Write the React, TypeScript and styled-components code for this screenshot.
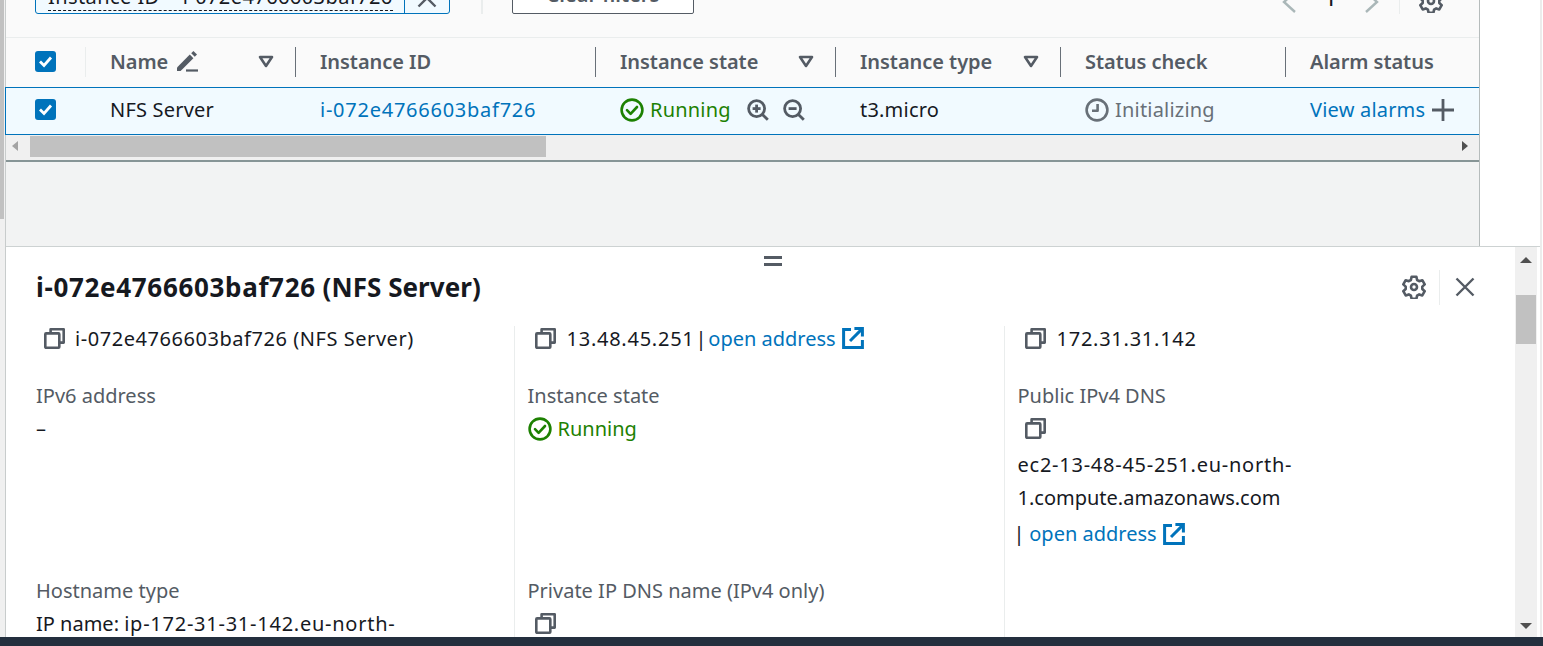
import React from "react";
import styled, { createGlobalStyle } from "styled-components";

const GlobalStyle = createGlobalStyle`
  html, body {
    margin: 0;
    padding: 0;
    background: #fff;
    overflow: hidden;
  }
  * {
    box-sizing: border-box;
  }
`;

const FONT = `"Noto Sans", "Open Sans", "Liberation Sans", sans-serif`;

function CopyIcon() {
  return (
    <CopySvg viewBox="0 0 21 21" fill="none" stroke="#545b64" strokeWidth="2.6">
      <path d="M6.6 5V1.3h13.1V14.6H15.4" strokeLinejoin="round" />
      <rect x="1.3" y="5.4" width="14" height="14.3" rx="0.8" />
    </CopySvg>
  );
}

function CheckCircle() {
  return (
    <StatusSvg viewBox="0 0 24 24" fill="none" stroke="#1d8102" strokeWidth="2.6">
      <circle cx="12" cy="12" r="10.4" />
      <path d="M7 12.2l3.6 3.6L17 9" strokeLinecap="round" strokeLinejoin="round" />
    </StatusSvg>
  );
}

function ClockIcon() {
  return (
    <StatusSvg viewBox="0 0 24 24" fill="none" stroke="#687078" strokeWidth="2.6">
      <circle cx="12" cy="12" r="10.4" />
      <path d="M12.6 6v6.8H7" strokeLinejoin="round" />
    </StatusSvg>
  );
}

function ZoomIcon({ plus }: { plus?: boolean }) {
  return (
    <ZoomSvg viewBox="0 0 22 22" fill="none" stroke="#545b64" strokeWidth="2.8">
      <circle cx="9.6" cy="9.6" r="8" />
      <path d="M15.4 15.4l5.4 5.4" />
      <path d="M5.6 9.6h8" />
      {plus && <path d="M9.6 5.6v8" />}
    </ZoomSvg>
  );
}

function FilterIcon() {
  return (
    <FilterSvg viewBox="0 0 16 13" fill="none" stroke="#545b64" strokeWidth="2.6">
      <path d="M2 2h12L8 11z" strokeLinejoin="round" />
    </FilterSvg>
  );
}

function PencilIcon() {
  return (
    <PencilSvg viewBox="0 0 22 22" fill="#545b64">
      <path d="M1 17.6L13.8 4.6l3.6 3.6L4.6 21H1z" />
      <path d="M15.2 3.2L17.4 1 21 4.6 18.8 6.8z" />
      <rect x="10" y="19.4" width="12" height="2.2" />
    </PencilSvg>
  );
}

function GearIcon() {
  return (
    <GearSvg viewBox="0 0 24 24" fill="none" stroke="#545b64" strokeWidth="2.6" strokeLinejoin="round">
      <circle cx="12" cy="12" r="3" />
      <path d="M9.6 1.8h4.8l.7 3.2 2.1 1.2 3.1-1 2.4 4.2-2.4 2.2v2.4l2.4 2.2-2.4 4.2-3.1-1-2.1 1.2-.7 3.2H9.6l-.7-3.2-2.1-1.2-3.1 1-2.4-4.2 2.4-2.2v-2.4L1.3 9.4l2.4-4.2 3.1 1 2.1-1.2z" />
    </GearSvg>
  );
}

function CloseIcon() {
  return (
    <CloseSvg viewBox="0 0 20 20" fill="none" stroke="#545b64" strokeWidth="2.4">
      <path d="M1.5 1.5l17 17M18.5 1.5l-17 17" />
    </CloseSvg>
  );
}

function ExternalIcon() {
  return (
    <ExternalSvg viewBox="0 0 22 22" fill="none" stroke="#0073bb" strokeWidth="3">
      <path d="M9 2.4H1.6v18h18.8V13" />
      <path d="M8 14L19.6 2.4" />
      <path d="M12.4 1.6h8v8" />
    </ExternalSvg>
  );
}

function Check() {
  return (
    <Checkbox>
      <svg viewBox="0 0 21 21" width="21" height="21" fill="none" stroke="#fff" strokeWidth="2.8">
        <path d="M5 10.5l4 4 7-8" />
      </svg>
    </Checkbox>
  );
}

function Header({ label, width, filter, edit }: { label: string; width: number; filter?: boolean; edit?: boolean }) {
  return (
    <HeaderCell $width={width}>
      <HeaderLabel>
        {label}
        {edit && <PencilIcon />}
      </HeaderLabel>
      {filter && <FilterIcon />}
    </HeaderCell>
  );
}

export default function App() {
  return (
    <>
      <GlobalStyle />
      <Page>
        <Body>
          <Rail>
            <RailThumb />
          </Rail>
          <Main>
            <TopArea>
              <InstancesPanel>
                <Toolbar>
                  <FilterToken>
                    <TokenText>
                      <TokenLabel>Instance ID = i-072e4766603baf726</TokenLabel>
                    </TokenText>
                    <TokenClose>
                      <CloseIcon />
                    </TokenClose>
                  </FilterToken>
                  <ToolbarDivider />
                  <ClearButton>Clear filters</ClearButton>
                  <Pagination>
                    <PageArrow viewBox="0 0 16 24" fill="none" stroke="#aab7b8" strokeWidth="2.4">
                      <path d="M14 2L3 12l11 10" />
                    </PageArrow>
                    <PageNumber>1</PageNumber>
                    <PageArrow viewBox="0 0 16 24" fill="none" stroke="#aab7b8" strokeWidth="2.4">
                      <path d="M2 2l11 10L2 22" />
                    </PageArrow>
                  </Pagination>
                  <SettingsGroup>
                    <GearIcon />
                  </SettingsGroup>
                </Toolbar>
                <HeaderRow>
                  <CheckCell>
                    <Check />
                  </CheckCell>
                  <FirstDivider />
                  <Header label="Name" width={210} filter edit />
                  <Header label="Instance ID" width={300} />
                  <Header label="Instance state" width={240} filter />
                  <Header label="Instance type" width={225} filter />
                  <Header label="Status check" width={225} />
                  <LastHeaderCell>
                    <HeaderLabel>Alarm status</HeaderLabel>
                  </LastHeaderCell>
                </HeaderRow>
                <SelectedRow>
                  <CheckCell>
                    <Check />
                  </CheckCell>
                  <DataCell $width={210}>NFS Server</DataCell>
                  <DataCell $width={300}>
                    <TableLink>
                      <Digits>i-072e4766603baf726</Digits>
                    </TableLink>
                  </DataCell>
                  <DataCell $width={240}>
                    <StatusOk>
                      <CheckCircle />
                      Running
                    </StatusOk>
                    <ZoomGroup>
                      <ZoomIcon plus />
                      <ZoomIcon />
                    </ZoomGroup>
                  </DataCell>
                  <DataCell $width={225}>t3.micro</DataCell>
                  <DataCell $width={225}>
                    <StatusPending>
                      <ClockIcon />
                      Initializing
                    </StatusPending>
                  </DataCell>
                  <LastDataCell>
                    <TableLink>View alarms</TableLink>
                    <PlusIcon viewBox="0 0 22 22" stroke="#545b64" strokeWidth="2.8">
                      <path d="M11 0v22M0 11h22" />
                    </PlusIcon>
                  </LastDataCell>
                </SelectedRow>
                <HScrollbar>
                  <ArrowLeft />
                  <HThumb />
                  <ArrowRight />
                </HScrollbar>
                <PanelFill />
              </InstancesPanel>
            </TopArea>
            <DetailPanel>
              <DetailContent>
                <Grabber>
                  <GrabberBar />
                  <GrabberBar />
                </Grabber>
                <TitleRow>
                  <Title>
                    <TitleId>i-072e4766603baf726</TitleId> (NFS Server)
                  </Title>
                  <TitleActions>
                    <GearIcon />
                    <TitleDivider />
                    <CloseIcon />
                  </TitleActions>
                </TitleRow>
                <FieldGrid>
                  <Cell>
                    <CopyRow>
                      <CopyIcon />
                      <NameText>i-072e4766603baf726 (NFS Server)</NameText>
                    </CopyRow>
                  </Cell>
                  <Cell $divider>
                    <CopyRow>
                      <CopyIcon />
                      <Digits>13.48.45.251</Digits>
                      <Sep>| </Sep>
                      <DetailLink>open address</DetailLink>
                      <ExternalIcon />
                    </CopyRow>
                  </Cell>
                  <Cell $divider>
                    <CopyRow>
                      <CopyIcon />
                      <Digits>172.31.31.142</Digits>
                    </CopyRow>
                  </Cell>

                  <Cell>
                    <Label>IPv6 address</Label>
                    <Value>–</Value>
                  </Cell>
                  <Cell $divider>
                    <Label>Instance state</Label>
                    <Value>
                      <StatusOk>
                        <CheckCircle />
                        Running
                      </StatusOk>
                    </Value>
                  </Cell>
                  <Cell $divider>
                    <Label>Public IPv4 DNS</Label>
                    <Value>
                      <CopyOnly>
                        <CopyIcon />
                      </CopyOnly>
                    </Value>
                    <DnsText>
                      <Digits>ec2-13-48-45-251.eu-north-</Digits>
                      <br />
                      1.compute.amazonaws.com
                    </DnsText>
                    <DnsLink>
                      <DnsSep>| </DnsSep>
                      <DetailLink>open address</DetailLink>
                      <ExternalIcon />
                    </DnsLink>
                  </Cell>

                  <Cell>
                    <Label>Hostname type</Label>
                    <Value>
                      IP name: <Digits>ip-172-31-31-142.eu-north-</Digits>
                    </Value>
                  </Cell>
                  <Cell $divider>
                    <Label>Private IP DNS name (IPv4 only)</Label>
                    <Value>
                      <CopyOnly>
                        <CopyIcon />
                      </CopyOnly>
                    </Value>
                  </Cell>
                  <Cell $divider />
                </FieldGrid>
              </DetailContent>
              <VScrollbar>
                <ArrowUp />
                <VThumb />
                <ArrowDown />
              </VScrollbar>
              <ScrollGap />
            </DetailPanel>
          </Main>
          <RightEdge />
        </Body>
        <Footer />
      </Page>
    </>
  );
}

const Page = styled.div`
  width: 1543px;
  height: 646px;
  display: flex;
  flex-direction: column;
  overflow: hidden;
  background: #fff;
  font-family: ${FONT};
  font-size: 20px;
  color: #16191f;
`;

const Body = styled.div`
  flex: 1;
  min-height: 0;
  display: flex;
`;

const Footer = styled.div`
  height: 9px;
  flex: none;
  background: #232f3e;
`;

const Rail = styled.div`
  width: 6px;
  flex: none;
  background: #f0f0f0;
  border-right: 1px solid #c8cccc;
`;

const RailThumb = styled.div`
  width: 4px;
  height: 219px;
  background: #c1c1c1;
`;

const Main = styled.div`
  width: 1534px;
  flex: none;
  display: flex;
  flex-direction: column;
`;

const RightEdge = styled.div`
  flex: 1;
  border-left: 2px solid #ececec;
`;

const TopArea = styled.div`
  height: 246px;
  flex: none;
  display: flex;
`;

const InstancesPanel = styled.div`
  width: 1474px;
  display: flex;
  flex-direction: column;
  border-right: 1px solid #b6bcbc;
  background: #f2f3f3;
`;

const Toolbar = styled.div`
  height: 38px;
  flex: none;
  display: flex;
  align-items: flex-end;
  padding: 0 0 23px 29px;
  overflow: hidden;
  background: #fafafa;
  border-bottom: 1px solid #eaeded;
`;

const FilterToken = styled.div`
  width: 415px;
  height: 40px;
  flex: none;
  display: flex;
  background: #f1faff;
  border: 1px solid #0073bb;
  border-radius: 3px;
`;

const TokenText = styled.div`
  flex: 1;
  display: flex;
  align-items: flex-end;
  padding: 0 0 2px 12px;
  overflow: hidden;
`;

const TokenLabel = styled.span`
  line-height: 27px;
  white-space: nowrap;
  letter-spacing: 0.42px;
  border-bottom: 1px dashed #16191f;
`;

const TokenClose = styled.div`
  width: 45px;
  flex: none;
  display: flex;
  align-items: flex-end;
  justify-content: center;
  padding-bottom: 5px;
  border-left: 1px solid #0073bb;
`;

const ToolbarDivider = styled.div`
  width: 2px;
  height: 26px;
  margin-left: 31px;
  flex: none;
  background: #eaeded;
`;

const ClearButton = styled.div`
  width: 182px;
  height: 40px;
  margin-left: 29px;
  flex: none;
  display: flex;
  align-items: center;
  justify-content: center;
  background: #fff;
  border: 1px solid #545b64;
  border-radius: 2px;
  font-weight: 600;
  color: #545b64;
`;

const Pagination = styled.div`
  margin-left: 587px;
  display: flex;
  align-items: flex-end;
  width: 99px;
  justify-content: space-between;
`;

const PageArrow = styled.svg`
  width: 16px;
  height: 24px;
  display: block;
`;

const PageNumber = styled.span`
  line-height: 24px;
  font-weight: 500;
  margin-bottom: 3px;
`;

const SettingsGroup = styled.div`
  width: 62px;
  height: 26px;
  margin-left: 19px;
  flex: none;
  display: flex;
  align-items: flex-end;
  justify-content: center;
  border-left: 1px solid #eaeded;
  svg {
    margin-bottom: 1px;
  }
`;

const HeaderRow = styled.div`
  position: relative;
  height: 49px;
  flex: none;
  display: flex;
  padding-bottom: 3px;
  background: #fafafa;
`;

const CheckCell = styled.div`
  width: 80px;
  flex: none;
  display: flex;
  align-items: center;
  padding-left: 29px;
`;

const FirstDivider = styled.div`
  width: 1px;
  height: 30px;
  margin: 9px 0 0 -1px;
  background: #eaeded;
`;

const Checkbox = styled.div`
  width: 21px;
  height: 21px;
  background: #0073bb;
  border-radius: 3px;
  svg {
    display: block;
  }
`;

const HeaderCell = styled.div<{ $width: number }>`
  position: relative;
  width: ${(p) => p.$width}px;
  flex: none;
  display: flex;
  align-items: center;
  justify-content: space-between;
  padding: 0 22px 0 24px;
  &::after {
    content: "";
    position: absolute;
    right: 0;
    top: 9px;
    height: 30px;
    width: 1px;
    background: #687078;
  }
`;

const LastHeaderCell = styled.div`
  flex: 1;
  display: flex;
  align-items: center;
  padding-left: 24px;
`;

const HeaderLabel = styled.span`
  display: inline-flex;
  align-items: center;
  gap: 8px;
  font-weight: 600;
  letter-spacing: -0.05px;
  color: #545b64;
  white-space: nowrap;
`;

const SelectedRow = styled.div`
  height: 48px;
  flex: none;
  display: flex;
  margin-left: -1px;
  padding-bottom: 3px;
  background: #f1faff;
  border: 1px solid #0073bb;
  border-right: none;
`;

const DataCell = styled.div<{ $width: number }>`
  width: ${(p) => p.$width}px;
  flex: none;
  display: flex;
  align-items: center;
  padding-left: 24px;
  letter-spacing: 0.2px;
  white-space: nowrap;
`;

const LastDataCell = styled.div`
  flex: 1;
  display: flex;
  align-items: center;
  gap: 7px;
  padding-left: 24px;
  letter-spacing: 0.2px;
  white-space: nowrap;
`;

const Digits = styled.span`
  letter-spacing: 0.75px;
`;

const NameText = styled.span`
  letter-spacing: 0.55px;
`;

const TableLink = styled.span`
  color: #0073bb;
`;

const StatusOk = styled.span`
  display: inline-flex;
  align-items: center;
  gap: 6px;
  color: #1d8102;
  white-space: nowrap;
`;

const StatusPending = styled(StatusOk)`
  color: #687078;
`;

const StatusSvg = styled.svg`
  width: 24px;
  height: 24px;
  flex: none;
`;

const ZoomGroup = styled.span`
  display: inline-flex;
  gap: 14px;
  margin-left: 16px;
`;

const ZoomSvg = styled.svg`
  width: 22px;
  height: 22px;
  display: block;
`;

const FilterSvg = styled.svg`
  width: 16px;
  height: 13px;
  flex: none;
`;

const PencilSvg = styled.svg`
  width: 22px;
  height: 22px;
`;

const GearSvg = styled.svg`
  width: 24px;
  height: 24px;
  display: block;
  flex: none;
`;

const CloseSvg = styled.svg`
  width: 20px;
  height: 20px;
  display: block;
  flex: none;
`;

const ExternalSvg = styled.svg`
  width: 22px;
  height: 22px;
  margin-left: 6px;
  flex: none;
`;

const PlusIcon = styled.svg`
  width: 22px;
  height: 22px;
  flex: none;
`;

const CopySvg = styled.svg`
  width: 21px;
  height: 21px;
  flex: none;
`;

const HScrollbar = styled.div`
  height: 27px;
  flex: none;
  display: flex;
  align-items: center;
  background: #f0f0f0;
  border-bottom: 2px solid #879596;
  padding: 0 11px 3px 8px;
`;

const HThumb = styled.div`
  width: 516px;
  height: 21px;
  margin-left: 12px;
  background: #c1c1c1;
`;

const ArrowLeft = styled.div`
  width: 0;
  height: 0;
  margin-left: -2px;
  border-style: solid;
  border-width: 5px 6px 5px 0;
  border-color: transparent #a3a3a3 transparent transparent;
`;

const ArrowRight = styled.div`
  width: 0;
  height: 0;
  margin-left: auto;
  border-style: solid;
  border-width: 5px 0 5px 6px;
  border-color: transparent transparent transparent #505050;
`;

const PanelFill = styled.div`
  flex: 1;
  background: #f2f3f3;
`;

const DetailPanel = styled.div`
  flex: 1;
  min-height: 0;
  display: flex;
  background: #fff;
  border-top: 1px solid #cdd2d2;
`;

const DetailContent = styled.div`
  flex: 1;
  min-width: 0;
  display: flex;
  flex-direction: column;
  overflow: hidden;
`;

const Grabber = styled.div`
  height: 20px;
  flex: none;
  display: flex;
  flex-direction: column;
  align-items: center;
  gap: 4px;
  padding: 9px 0 0 25px;
`;

const GrabberBar = styled.div`
  width: 18px;
  height: 3px;
  background: #545b64;
`;

const TitleRow = styled.div`
  height: 40px;
  flex: none;
  display: flex;
  align-items: center;
  justify-content: space-between;
  padding: 0 40px 0 30px;
`;

const Title = styled.h2`
  margin: 0;
  padding-bottom: 1px;
  font-size: 26px;
  font-weight: 700;
  letter-spacing: 0.05px;
  color: #16191f;
`;

const TitleId = styled.span`
  letter-spacing: 0.67px;
`;

const TitleActions = styled.div`
  display: flex;
  align-items: center;
`;

const TitleDivider = styled.div`
  width: 1px;
  height: 35px;
  margin: 0 15px 0 13px;
  background: #eaeded;
`;

const FieldGrid = styled.div`
  display: grid;
  grid-template-columns: 508px 490px 1fr;
  margin-top: 19px;
`;

const Cell = styled.div<{ $divider?: boolean }>`
  padding-left: ${(p) => (p.$divider ? "12.5px" : "30px")};
  padding-bottom: 24px;
  border-left: ${(p) => (p.$divider ? "1px solid #eaeded" : "none")};
`;

const CopyRow = styled.div`
  height: 24px;
  margin-bottom: 5px;
  display: flex;
  align-items: center;
  white-space: pre;
  padding-left: 7.5px;
  svg:first-child {
    margin-right: 10.5px;
  }
`;

const Sep = styled.span`
  margin: 0 -3.5px 0 1px;
`;

const DnsSep = styled.span`
  margin: 0 -0.5px 0 0;
`;

const CopyOnly = styled.span`
  display: flex;
  align-items: center;
  height: 33px;
  padding-left: 7.5px;
`;

const Label = styled.div`
  height: 33px;
  line-height: 33px;
  color: #545b64;
  white-space: nowrap;
`;

const Value = styled.div`
  height: 33px;
  line-height: 33px;
  white-space: nowrap;
`;

const DnsText = styled.div`
  line-height: 33px;
  margin-top: 3px;
  white-space: nowrap;
`;

const DnsLink = styled.div`
  display: flex;
  align-items: center;
  white-space: pre;
  height: 33px;
  margin: 3px 0 0 -4px;
`;

const DetailLink = styled.span`
  color: #0073bb;
`;

const VScrollbar = styled.div`
  width: 22px;
  flex: none;
  display: flex;
  flex-direction: column;
  align-items: center;
  background: #f0f0f0;
  padding: 10px 0 8px;
`;

const VThumb = styled.div`
  width: 20px;
  height: 49px;
  margin-top: 32px;
  background: #c1c1c1;
`;

const ArrowUp = styled.div`
  width: 0;
  height: 0;
  border-style: solid;
  border-width: 0 6px 6px 6px;
  border-color: transparent transparent #505050 transparent;
`;

const ArrowDown = styled.div`
  width: 0;
  height: 0;
  margin-top: auto;
  border-style: solid;
  border-width: 6px 6px 0 6px;
  border-color: #505050 transparent transparent transparent;
`;

const ScrollGap = styled.div`
  width: 3px;
  flex: none;
`;
